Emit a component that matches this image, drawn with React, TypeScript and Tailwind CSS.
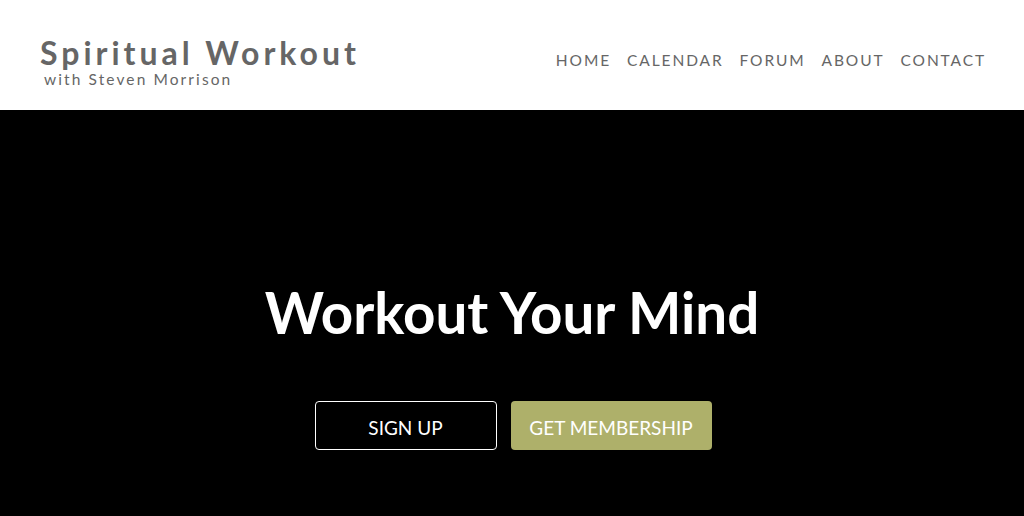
export default function App() {
  const links = ['HOME', 'CALENDAR', 'FORUM', 'ABOUT', 'CONTACT']

  return (
    <div className="w-[1024px] h-[516px] flex flex-col font-['Lato','Open_Sans',sans-serif]">
      <header className="h-[110px] bg-white flex items-center justify-between pl-[40px] pr-[38px]">
        <div className="flex flex-col mt-[14px]">
          <span className="text-[32px] leading-[32px] font-bold tracking-[4px] text-[#666666]">
            Spiritual Workout
          </span>
          <span className="text-[15.5px] leading-[18px] tracking-[2.1px] text-[#666666] ml-[4px] mt-[1px]">
            with Steven Morrison
          </span>
        </div>
        <nav className="flex items-center gap-[16px] mt-[12px]">
          {links.map((l) => (
            <a key={l} className="text-[15.5px] tracking-[1.9px] text-[#666666]">
              {l}
            </a>
          ))}
        </nav>
      </header>
      <section className="flex-1 bg-black flex flex-col items-center pt-[171px]">
        <h1 className="text-[56.5px] leading-[62px] font-bold text-white">Workout Your Mind</h1>
        <div className="flex gap-[14px] mt-[58px] ml-[2px]">
          <button className="w-[182px] h-[49px] border-[1.5px] border-white rounded-[4px] text-white text-[19px] pt-[5px]">
            SIGN UP
          </button>
          <button className="w-[201px] h-[49px] bg-[#aeb06a] rounded-[4px] text-white text-[19px] pt-[5px]">
            GET MEMBERSHIP
          </button>
        </div>
      </section>
    </div>
  )
}
